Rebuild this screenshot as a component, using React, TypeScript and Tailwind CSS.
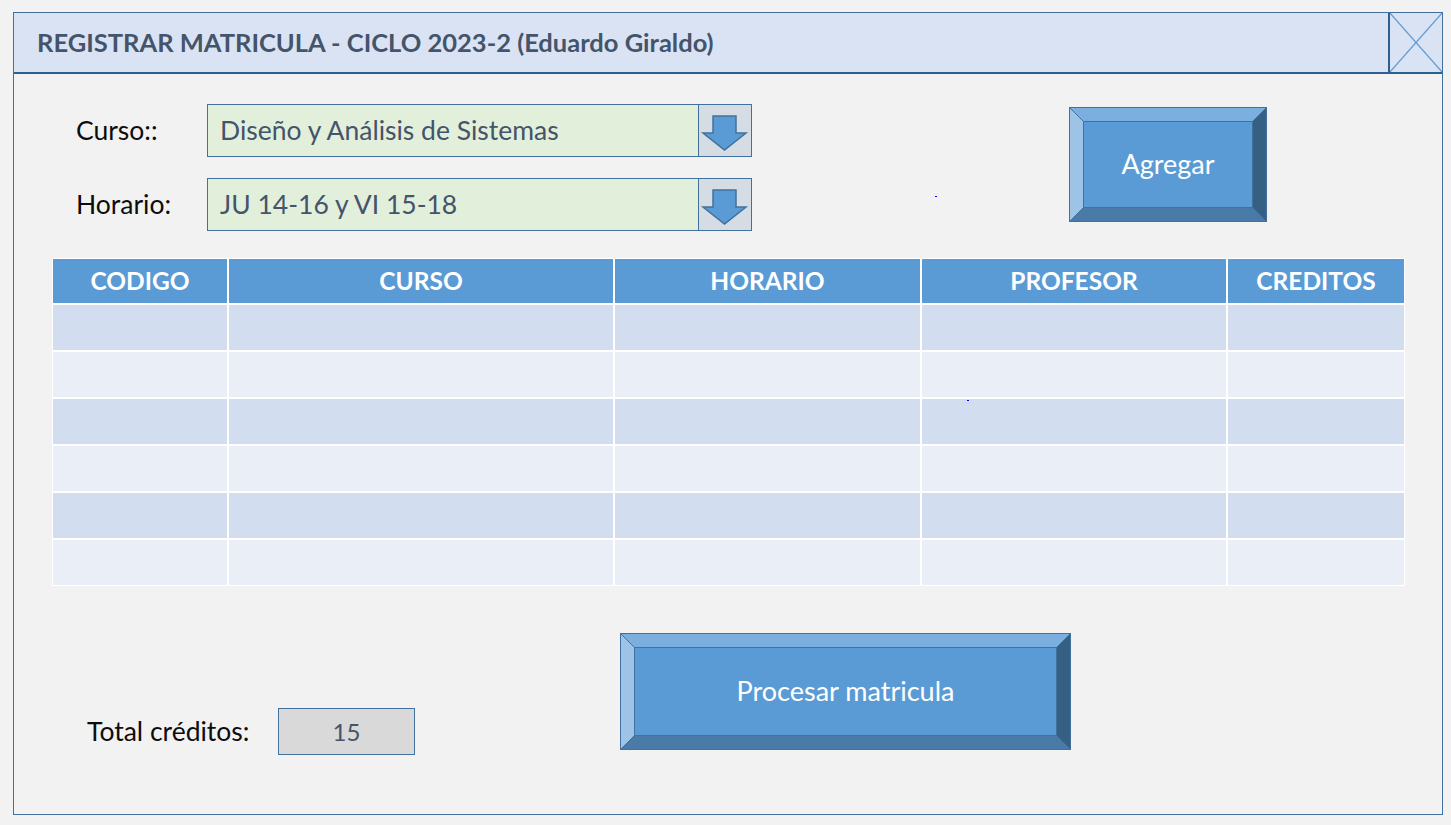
import React from "react";

const font = { fontFamily: "Lato, 'Open Sans', sans-serif" };

function Combo({ value }: { value: string }) {
  return (
    <div className="flex h-[53px] w-[545px]">
      <div className="flex flex-1 items-center border border-[#41719c] bg-[#e2efda] pl-[12px] text-[26.5px] text-[#44546a]">
        {value}
      </div>
      <div className="w-[53px] border border-l-0 border-[#41719c] bg-[#d6dce4]">
        <svg width="52" height="51" viewBox="0 0 52 51">
          <path
            d="M14 11 H37 V28 H47 L25.5 45 L4 28 H14 Z"
            fill="#5b9bd5"
            stroke="#41719c"
            strokeWidth="1.5"
            strokeLinejoin="miter"
          />
        </svg>
      </div>
    </div>
  );
}

function BevelButton({ label, w, h }: { label: string; w: number; h: number }) {
  return (
    <div className="relative border border-[#41719c]" style={{ width: w, height: h }}>
      <div className="h-full w-full border-[13px] border-t-[#7aafe0] border-l-[#9dc3e6] border-r-[#365f84] border-b-[#4a7aa8]">
        <div className="flex h-full w-full items-center justify-center border border-[#41719c] bg-[#5b9bd5] text-[27px] text-white">
          {label}
        </div>
      </div>
      <svg className="pointer-events-none absolute left-[-1px] top-[-1px]" width={w} height={h}>
        <g stroke="#41719c" strokeWidth="1">
          <line x1="0" y1="0" x2="14" y2="14" />
          <line x1={w} y1="0" x2={w - 14} y2="14" />
          <line x1="0" y1={h} x2="14" y2={h - 14} />
          <line x1={w} y1={h} x2={w - 14} y2={h - 14} />
        </g>
      </svg>
    </div>
  );
}

const headers = ["CODIGO", "CURSO", "HORARIO", "PROFESOR", "CREDITOS"];

export default function App() {
  const rows = [0, 1, 2, 3, 4, 5];
  return (
    <div className="relative h-[825px] w-[1451px] bg-[#f2f2f2] pl-[13px] pt-[12px]" style={font}>
      <div className="flex h-[803px] w-[1430px] flex-col border border-[#41719c]">
        {/* Title bar */}
        <div className="flex h-[61px] border-b-2 border-[#2e5f8f] bg-[#dae3f3]">
          <div className="flex flex-1 items-center pl-[23px] text-[25.5px] font-bold text-[#44546a]">
            REGISTRAR MATRICULA - CICLO 2023-2 (Eduardo Giraldo)
          </div>
          <div className="w-[54px] border-l-2 border-[#2e5f8f]">
            <svg width="52" height="59" viewBox="0 0 52 59">
              <line x1="0" y1="0" x2="52" y2="59" stroke="#5b9bd5" strokeWidth="1.2" />
              <line x1="52" y1="0" x2="0" y2="59" stroke="#5b9bd5" strokeWidth="1.2" />
            </svg>
          </div>
        </div>

        {/* Top form */}
        <div className="flex pl-[62px] pt-[30px]">
          <div className="flex flex-col gap-[21px]">
            <div className="flex items-center">
              <div className="w-[131px] text-[26.5px] text-[#0d0d0d]">Curso::</div>
              <Combo value="Diseño y Análisis de Sistemas" />
            </div>
            <div className="flex items-center">
              <div className="w-[131px] text-[26.5px] text-[#0d0d0d]">Horario:</div>
              <Combo value="JU 14-16 y VI 15-18" />
            </div>
          </div>
          <div className="ml-[317px] mt-[3px]">
            <BevelButton label="Agregar" w={198} h={115} />
          </div>
        </div>

        {/* Table */}
        <div className="ml-[38px] mt-[27px] grid w-[1353px] grid-cols-[174px_384px_305px_304px_176px] gap-[2px] bg-white p-[1px]">
          {headers.map((h) => (
            <div
              key={h}
              className="flex h-[44px] items-center justify-center bg-[#5b9bd5] text-[24.5px] font-bold text-white"
            >
              {h}
            </div>
          ))}
          {rows.map((r) =>
            headers.map((h) => (
              <div
                key={`${r}-${h}`}
                className={`h-[45px] ${r % 2 === 0 ? "bg-[#d2deef]" : "bg-[#eaeff7]"}`}
              />
            ))
          )}
        </div>

        {/* Bottom */}
        <div className="mt-[47px] flex">
          <div className="mt-[75px] flex pl-[73px]">
            <div className="flex h-[47px] w-[191px] items-center text-[26.5px] text-[#0d0d0d]">
              Total créditos:
            </div>
            <div className="flex h-[47px] w-[137px] items-center justify-center border border-[#41719c] bg-[#d9d9d9] text-[24px] text-[#44546a]">
              15
            </div>
          </div>
          <div className="ml-[205px]">
            <BevelButton label="Procesar matricula" w={451} h={117} />
          </div>
        </div>
      </div>

      {/* stray marks */}
      <div className="absolute left-[935px] top-[196px] h-[1px] w-[2px] bg-[#0000ff]" />
      <div className="absolute left-[967px] top-[400px] h-[1px] w-[2px] bg-[#0000ff]" />
    </div>
  );
}
